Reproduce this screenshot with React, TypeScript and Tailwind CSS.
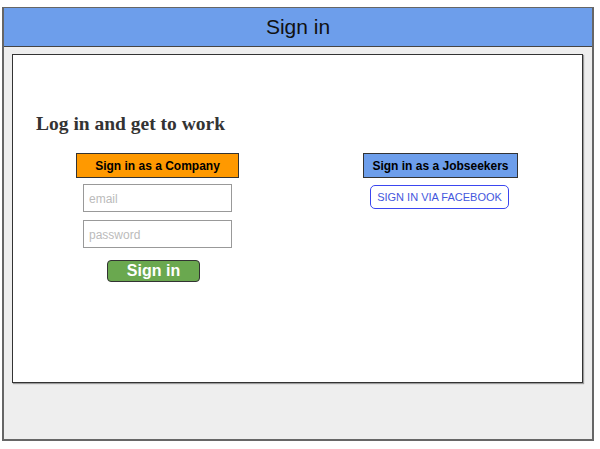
import React from 'react';

const sans = { fontFamily: '"Liberation Sans", Arial, sans-serif' };

export default function App() {
    return (
        <div className="w-[600px] h-[449px] bg-white pt-[7px] pl-[2px]" style={sans}>
            <div className="w-[592px] h-[434px] bg-[#eeeeee] border-[#666666] border-l-2 border-r-2 border-b-2 border-t flex flex-col">
                {/* Titelbalk */}
                <div className="h-[39px] bg-[#6d9eeb] border-b border-[#444] flex items-center justify-center text-[21px] text-[#111]">
                    Sign in
                </div>

                {/* Paneel */}
                <div className="ml-[8px] mt-[7px] w-[571px] h-[329px] bg-white border border-[#333] shadow-[1px_1px_1px_rgba(0,0,0,0.35)] pt-[57px] pl-[23px]">
                    <h1 className="text-[19.5px] leading-[24px] font-bold text-[#333]" style={{ fontFamily: '"Liberation Serif", Georgia, serif' }}>
                        Log in and get to work
                    </h1>

                    <div className="flex mt-[17px]">
                        {/* Bedrijf */}
                        <div className="ml-[40px] w-[163px] flex flex-col items-center">
                            <button className="w-[163px] h-[25px] bg-[#ff9900] border border-[#333] text-[12px] font-bold text-black">
                                Sign in as a Company
                            </button>
                            <input placeholder="email" className="mt-[6px] w-[149px] h-[28px] border border-[#999] px-[5px] pt-[2px] text-[12px] placeholder:text-[#bbbbbb] outline-none" />
                            <input placeholder="password" className="mt-[8px] w-[149px] h-[28px] border border-[#999] px-[5px] pt-[2px] text-[12px] placeholder:text-[#bbbbbb] outline-none" />
                            <button className="mt-[12px] self-start ml-[31px] w-[93px] h-[22px] bg-[#6aa84f] border border-[#333] rounded-[4px] text-[16px] leading-[18px] font-bold text-white">
                                Sign in
                            </button>
                        </div>

                        {/* Werkzoekenden */}
                        <div className="ml-[124px] w-[155px] flex flex-col items-center">
                            <button className="w-[155px] h-[25px] bg-[#6d9eeb] border border-[#333] text-[12px] font-bold text-black">
                                Sign in as a Jobseekers
                            </button>
                            <button className="mt-[7px] -ml-[2px] w-[139px] h-[24px] bg-white border-[1.5px] border-[#3b46f0] rounded-[5px] text-[11px] text-[#4457dd]">
                                SIGN IN VIA FACEBOOK
                            </button>
                        </div>
                    </div>
                </div>
            </div>
        </div>
    );
}
